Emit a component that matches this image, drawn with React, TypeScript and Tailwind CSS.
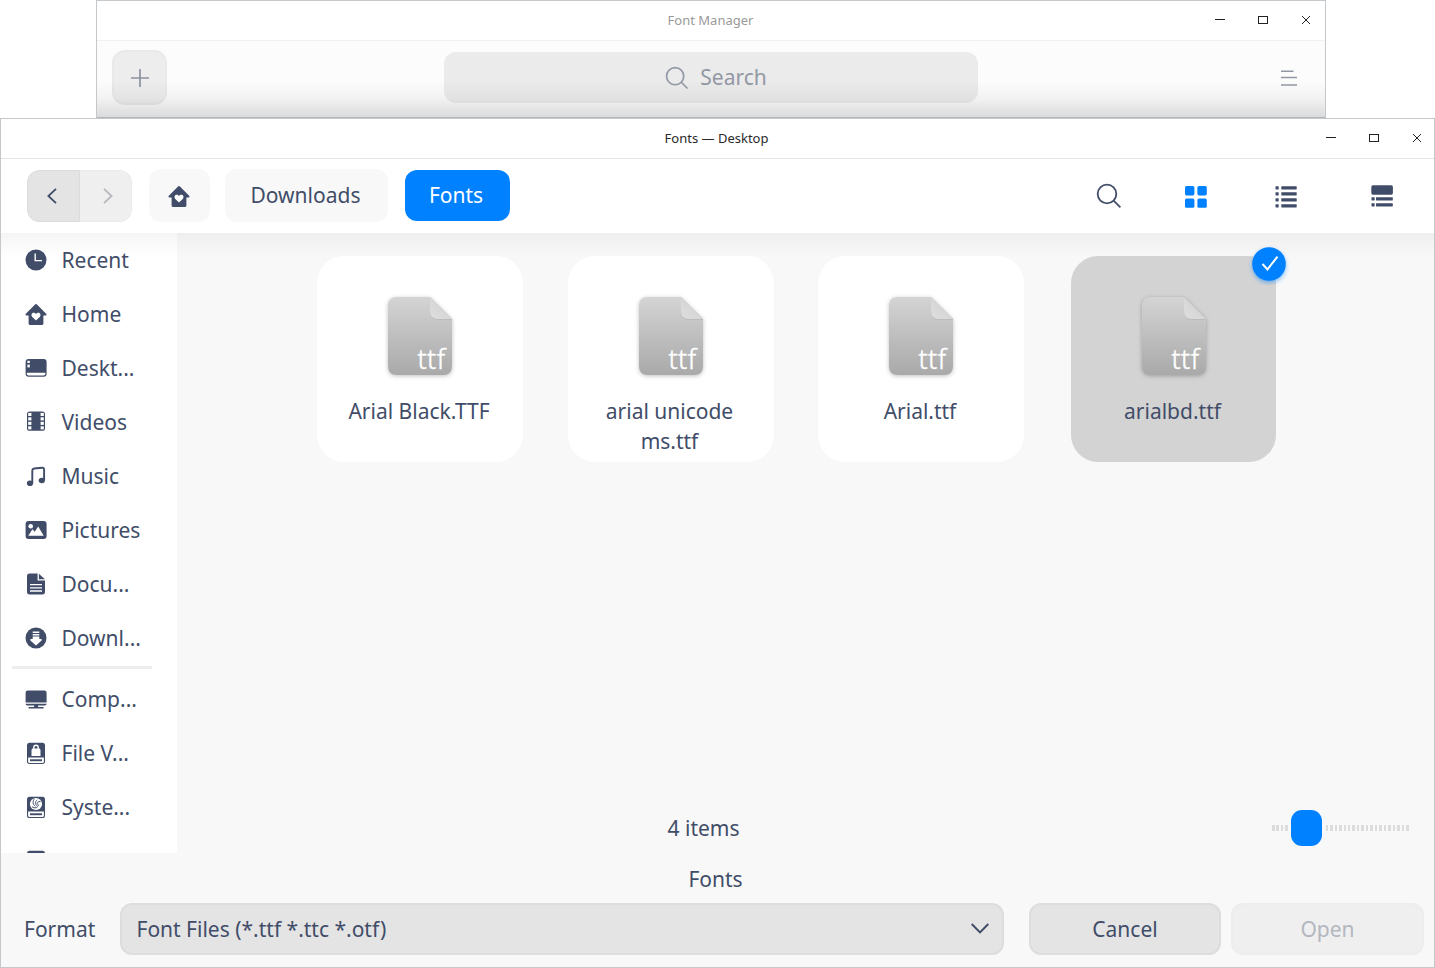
import type { ReactNode } from "react";

const INK = "#414d68";

function Glyph({ children }: { children: ReactNode }) {
  return (
    <svg width="24" height="24" viewBox="0 0 24 24" className="shrink-0" fill={INK}>
      {children}
    </svg>
  );
}

function HomeIcon() {
  return (
    <Glyph>
      <path d="M11.3 2.3Q12 1.7 12.7 2.3L22.4 11.9Q22.8 13.5 21.6 13.6H19.4V21.6Q19.4 22.9 18.1 22.9H5.9Q4.6 22.9 4.6 21.6V13.6H2.4Q1.2 13.5 1.6 11.9Z" />
      <path fill="#fff" d="M12 18.6 8.3 15C6.6 12.9 7.9 10.8 9.7 10.8 10.9 10.8 11.6 11.4 12 12.1 12.4 11.4 13.1 10.8 14.3 10.8 16.1 10.8 17.4 12.9 15.7 15Z" />
    </Glyph>
  );
}

function DriveBase() {
  return (
    <>
      <rect x="3" y="1.8" width="18" height="21.2" rx="2.6" />
      <path fill="#fff" d="M4.1 16.4H19.9V20.4Q19.9 22 18.3 22H5.7Q4.1 22 4.1 20.4Z" />
      <rect x="6" y="18.3" width="12" height="1.9" />
    </>
  );
}

const places: { label: string; icon: ReactNode }[] = [
  {
    label: "Recent",
    icon: (
      <Glyph>
        <circle cx="12" cy="12" r="10.5" />
        <path d="M11.2 5.6V12.6H18" fill="none" stroke="#fff" strokeWidth="1.4" />
      </Glyph>
    ),
  },
  { label: "Home", icon: <HomeIcon /> },
  {
    label: "Deskt...",
    icon: (
      <Glyph>
        <rect x="1.6" y="3" width="21" height="17.8" rx="3" />
        <g fill="#fff">
          <rect x="3.4" y="4.8" width="2.4" height="2.2" />
          <rect x="3.4" y="8.6" width="2.4" height="2.8" />
          <path d="M2.8 16.7H21.4V17.6Q21.4 19.6 19.6 19.6H4.6Q2.8 19.6 2.8 17.6Z" />
        </g>
      </Glyph>
    ),
  },
  {
    label: "Videos",
    icon: (
      <Glyph>
        <rect x="3" y="1.6" width="18" height="19.2" rx="2.6" />
        <g fill="#fff">
          {[2.9, 7.3, 11.8, 16.3].map((y) => (
            <g key={y}>
              <rect x="4.2" y={y} width="3.2" height="3.1" />
              <rect x="16.6" y={y} width="3.2" height="3.1" />
            </g>
          ))}
        </g>
      </Glyph>
    ),
  },
  {
    label: "Music",
    icon: (
      <Glyph>
        <ellipse cx="6" cy="19.2" rx="3.1" ry="2.8" />
        <ellipse cx="17.8" cy="16.5" rx="3.1" ry="2.8" />
        <path d="M8.3 19V6.6Q8.3 4.8 10.1 4.5L18 3.7Q20.1 3.5 20.1 5.4V16.5" fill="none" stroke={INK} strokeWidth="1.9" />
      </Glyph>
    ),
  },
  {
    label: "Pictures",
    icon: (
      <Glyph>
        <rect x="1.6" y="3" width="21" height="18" rx="3" />
        <circle cx="6.7" cy="8.2" r="2.3" fill="#fff" />
        <path fill="#fff" d="M4.3 17.7 8.4 11.2 10.7 13.8 14.2 8.4 19.7 17.7Z" />
      </Glyph>
    ),
  },
  {
    label: "Docu...",
    icon: (
      <Glyph>
        <path d="M5.6 1.6H13.6V8.6H21V19.8Q21 22.4 18.4 22.4H5.6Q3 22.4 3 19.8V4.2Q3 1.6 5.6 1.6Z" />
        <path d="M14.9 1.8 20.9 7.3H14.9Z" />
        <path d="M6 12.6H18M6 15.8H18M6 19H18" stroke="#fff" strokeWidth="1.3" />
      </Glyph>
    ),
  },
  {
    label: "Downl...",
    icon: (
      <Glyph>
        <circle cx="12" cy="12" r="10.5" />
        <path fill="#fff" d="M8.7 5.6H15.3V7H8.7ZM8.7 8H15.3V9.4H8.7ZM8.7 10.5H15.3V13H17.6V14.4L12 19.6 6.4 14.4V13H8.7Z" />
      </Glyph>
    ),
  },
];

const devices: { label: string; icon: ReactNode }[] = [
  {
    label: "Comp...",
    icon: (
      <Glyph>
        <path d="M3.8 3.4H20.4Q22.6 3.4 22.6 5.6V15.6H1.6V5.6Q1.6 3.4 3.8 3.4ZM1.6 16.8H22.6Q22.6 18.5 20.9 18.5H3.3Q1.6 18.5 1.6 16.8ZM10.3 18.5H13.9L14.4 20H19.6V21.4H4.6V20H9.8Z" />
      </Glyph>
    ),
  },
  {
    label: "File V...",
    icon: (
      <Glyph>
        <DriveBase />
        <path fill="#fff" d="M8.3 7.6H15.7L16.5 9V15H7.5V9Z" />
        <path d="M9.8 8.4V6.6Q9.8 4.3 12 4.3T14.2 6.6V8.4" fill="none" stroke="#fff" strokeWidth="1.4" />
      </Glyph>
    ),
  },
  {
    label: "Syste...",
    icon: (
      <Glyph>
        <DriveBase />
        <circle cx="12" cy="9" r="6.1" fill="#fff" />
        <path d="M10.2 4.2C8.2 7 9 9.6 11.4 11.4M13.2 5C11 6.6 11.2 8.6 12.6 10.6M16.6 6.4C13.6 6.4 12.8 8 13.4 9.6M8 11.6C10.4 13.8 13.8 13.2 14.6 9.6" fill="none" stroke={INK} strokeWidth="1" />
      </Glyph>
    ),
  },
  {
    label: "",
    icon: (
      <Glyph>
        <DriveBase />
      </Glyph>
    ),
  },
];

function Place({ label, icon }: { label: string; icon: ReactNode }) {
  return (
    <div className="flex h-[54px] shrink-0 items-center gap-[13.5px] pl-[23px]">
      {icon}
      <span className="whitespace-nowrap">{label}</span>
    </div>
  );
}

function WindowButtons() {
  return (
    <svg width="98" height="12" viewBox="0 0 98 12" fill="none" stroke="#222" shapeRendering="crispEdges">
      <path d="M1 5.5H11" />
      <rect x="44.5" y="2.5" width="9" height="7" />
      <path d="M88 2 96 10M96 2 88 10" shapeRendering="auto" />
    </svg>
  );
}

function TitleBar({ title, dim }: { title: string; dim?: boolean }) {
  return (
    <div className={`grid h-10 shrink-0 grid-cols-[1fr_auto_1fr] items-center border-b bg-white pb-[2px] text-[13px] ${dim ? "border-[#f0f0f0] pr-[2px] text-[#9a9a9a]" : "border-[#e2e4e6] text-[#2a2a2a]"}`}>
      <span />
      <span className={dim ? "pl-px" : "pr-[2px]"}>{title}</span>
      <div className="flex justify-end pr-[11px]">
        <WindowButtons />
      </div>
    </div>
  );
}

function FileIcon({ id }: { id: string }) {
  return (
    <svg width="76" height="92" viewBox="0 0 76 92" className="shrink-0">
      <defs>
        <linearGradient id={id} x1="0" y1="0" x2="0" y2="1">
          <stop offset="0" stopColor="#d4d4d4" />
          <stop offset="1" stopColor="#a9a9a9" />
        </linearGradient>
        <linearGradient id={`${id}-fold`} x1="0" y1="1" x2="1" y2="0">
          <stop offset="0" stopColor="#dedede" />
          <stop offset="1" stopColor="#cfcfcf" />
        </linearGradient>
      </defs>
      <path
        d="M15 6H48L70 28V75Q70 84 61 84H15Q6 84 6 75V15Q6 6 15 6Z"
        fill={`url(#${id})`}
        className="drop-shadow-[0_1px_2px_rgba(0,0,0,0.25)]"
      />
      <path d="M48 6 70 28V29H56Q48 29 48 21Z" fill="#000" opacity="0.06" />
      <path d="M48 6 70 28H56Q48 28 48 20Z" fill={`url(#${id}-fold)`} />
      <text x="35.5" y="78" fill="#fff" stroke="#fff" strokeWidth="0.45" fontSize="27" fontWeight="300" letterSpacing="0.4" fontFamily="'Noto Sans', sans-serif">
        ttf
      </text>
    </svg>
  );
}

function FileCard({ id, name, selected }: { id: string; name: string; selected?: boolean }) {
  return (
    <div className={`relative flex h-[206px] flex-col items-center rounded-[27px] pt-[35px] ${selected ? "ml-[2px] w-[205px] bg-[#d3d3d3] pl-px" : "w-[206px] bg-white"}`}>
      <FileIcon id={id} />
      <p className="mt-[13px] w-[160px] pr-[2px] text-center leading-[30px]">{name}</p>
      {selected && (
        <svg width="42" height="42" viewBox="0 0 42 42" className="absolute -right-[14px] -top-[13.5px]">
          <circle cx="21" cy="21" r="16.8" fill="#0081ff" className="drop-shadow-[0_2px_2px_rgba(0,129,255,0.5)]" />
          <path d="M14.5 21 19.5 26.4 29.5 13.6" fill="none" stroke="#fff" strokeWidth="2" />
        </svg>
      )}
    </div>
  );
}

function Magnifier({ size, color }: { size: number; color: string }) {
  return (
    <svg width={size} height={size} viewBox="0 0 26 26" fill="none" stroke={color} strokeWidth="1.8">
      <circle cx="11" cy="11" r="9.3" />
      <path d="M17.6 17.6 24.4 24.4" />
    </svg>
  );
}

export default function App() {
  return (
    <div className="flex h-[968px] w-[1435px] flex-col overflow-hidden bg-white font-['Noto_Sans',sans-serif] text-[21px] leading-[30px] text-[#414d68]">
      <section className="relative ml-24 flex h-[118px] w-[1230px] shrink-0 flex-col border border-b-0 border-[#c3c8cd] bg-[#fcfcfc]">
        <TitleBar title="Font Manager" dim />
        <div className="grid grow grid-cols-[1fr_534px_1fr] items-start px-[15px]">
          <button className="mt-[9px] flex h-[55px] w-[55px] items-center justify-center rounded-[13px] border-2 border-[#e9e9e9] bg-[#ededed]">
            <svg width="18" height="18" viewBox="0 0 18 18" stroke="#8b919f" strokeWidth="1.7">
              <path d="M9 0V18M0 9H18" />
            </svg>
          </button>
          <div className="mt-[11px] flex h-[51px] items-center justify-center gap-[11px] rounded-[12px] bg-[#ebebeb] pl-[10px] text-[#9298a4]">
            <Magnifier size={24} color="#9298a4" />
            <span className="pb-px">Search</span>
          </div>
          <svg width="16" height="18" viewBox="0 0 16 18" stroke="#9298a4" strokeWidth="1.5" className="mr-[13px] mt-[28px] justify-self-end">
            <path d="M0 2.3H12.5M0 8.5H16M0 16H16" />
          </svg>
        </div>
        <div className="pointer-events-none absolute inset-x-0 bottom-0 h-[38px] border-b border-[#b4b6b8] bg-linear-to-b from-transparent via-black/4 to-black/13" />
      </section>

      <section className="flex grow flex-col border border-[#c3c8cd] bg-[#f8f8f8]">
        <TitleBar title="Fonts — Desktop" />
        <div className="flex h-[74px] shrink-0 items-center bg-white pl-[26px] pr-[41px]">
          <div className="flex h-[52px] w-[105px] overflow-hidden rounded-[12px]">
            <button className="flex w-[53px] items-center justify-center rounded-l-[12px] border border-[#dbdbdb] bg-[#e4e4e4] pr-[3px]">
              <svg width="10" height="16" viewBox="0 0 10 16" fill="none" stroke={INK} strokeWidth="1.8">
                <path d="M9 .8 1.4 8 9 15.2" />
              </svg>
            </button>
            <button className="flex w-[52px] items-center justify-center rounded-r-[12px] border border-l-0 border-[#ebebeb] bg-[#efefef] pl-1">
              <svg width="10" height="16" viewBox="0 0 10 16" fill="none" stroke="#b6b8be" strokeWidth="1.8">
                <path d="M1 .8 8.6 8 1 15.2" />
              </svg>
            </button>
          </div>
          <button className="mb-px ml-[17px] flex h-[53px] w-[61px] items-center justify-center rounded-[12px] bg-[#f8f8f8] pr-px">
            <HomeIcon />
          </button>
          <button className="mb-px ml-[15px] h-[53px] w-[163px] rounded-[12px] bg-[#f8f8f8] pb-px pr-[2px]">Downloads</button>
          <button className="mb-px ml-[17px] h-[51px] w-[105px] rounded-[12px] bg-[#0081ff] pb-px pr-[3px] text-white">Fonts</button>
          <div className="ml-auto flex items-center">
            <Magnifier size={26} color={INK} />
            <svg width="22" height="22" viewBox="0 0 22 22" fill="#0081ff" className="ml-[63px] mt-[2px]">
              <rect width="9.4" height="9.4" rx="1.6" />
              <rect x="12.4" width="9.4" height="9.4" rx="1.6" />
              <rect y="12.4" width="9.4" height="9.4" rx="1.6" />
              <rect x="12.4" y="12.4" width="9.4" height="9.4" rx="1.6" />
            </svg>
            <svg width="22" height="22" viewBox="0 0 22 22" fill={INK} className="ml-[68px] mt-[2px]">
              {[0, 6, 12, 18].map((y) => (
                <g key={y}>
                  <rect x="0.5" y={y + 0.2} width="3.2" height="3.2" rx=".6" />
                  <rect x="6.3" y={y + 0.2} width="15.4" height="3.2" rx=".4" />
                </g>
              ))}
            </svg>
            <svg width="22" height="22" viewBox="0 0 22 22" fill={INK} className="ml-[74px]">
              <rect x="0.3" y="0.3" width="21.6" height="9.4" rx="1.6" />
              <rect x="0.5" y="12.2" width="3.2" height="3.2" rx=".6" />
              <rect x="5" y="12.2" width="16.8" height="3.2" rx=".4" />
              <rect x="0.5" y="18.2" width="3.2" height="3.2" rx=".6" />
              <rect x="5" y="18.2" width="16.8" height="3.2" rx=".4" />
            </svg>
          </div>
        </div>

        <div className="relative flex h-[620px] shrink-0">
          <nav className="flex w-[176px] shrink-0 flex-col overflow-hidden bg-white">
            {places.map((p) => (
              <Place key={p.label} {...p} />
            ))}
            <div className="mb-[3px] ml-[11px] mt-px h-[3px] w-[140px] shrink-0 bg-[#ededed]" />
            {devices.map((p) => (
              <Place key={p.label} {...p} />
            ))}
          </nav>
          <div className="pointer-events-none absolute inset-x-0 top-0 h-6 bg-linear-to-b from-black/4 to-transparent" />
          <main className="relative flex grow flex-col justify-between">
            <div className="flex gap-[44.5px] pl-[140px] pt-[23px]">
              <FileCard id="f1" name="Arial Black.TTF" />
              <FileCard id="f2" name="arial unicode ms.ttf" />
              <FileCard id="f3" name="Arial.ttf" />
              <FileCard id="f4" name="arialbd.ttf" selected />
            </div>
            <div className="flex h-[50px] items-center justify-between pl-[490.5px] pr-[25px]">
              <span>4 items</span>
              <div className="relative flex h-9 w-[137px] items-center justify-between">
                {Array.from({ length: 31 }, (_, i) => (
                  <i key={i} className="h-[6px] w-[2.5px] bg-[#dcdcdc]" />
                ))}
                <span className="absolute left-[16px] top-0 h-9 w-[37px] bg-[#f8f8f8]" />
                <span className="absolute left-[19px] top-0 h-9 w-[31px] rounded-[11px] bg-[#0081ff]" />
              </div>
            </div>
          </main>
        </div>

        <footer className="flex grow flex-col">
          <p className="mt-[11px] pr-[4px] text-center">Fonts</p>
          <div className="mt-[9px] flex h-[52px] items-center pl-[23px] pr-[10px]">
            <span className="w-[96px]">Format</span>
            <button className="flex h-[52px] w-[884px] items-center justify-between rounded-[12px] border-2 border-[#dddddd] bg-[#e4e4e4] pl-[14.5px] pr-[13px]">
              Font Files (*.ttf *.ttc *.otf)
              <svg width="18" height="11" viewBox="0 0 18 11" fill="none" stroke={INK} strokeWidth="2" className="-mt-[2px]">
                <path d="M.7 1 9 9.4 17.3 1" />
              </svg>
            </button>
            <button className="ml-[25px] h-[52px] w-[192px] rounded-[12px] border-2 border-[#dddddd] bg-[#e4e4e4]">Cancel</button>
            <button className="ml-[10px] h-[52px] w-[193px] rounded-[12px] border-2 border-[#ededed] bg-[#efefef] text-[#b3b7c0]">Open</button>
          </div>
        </footer>
      </section>
    </div>
  );
}
